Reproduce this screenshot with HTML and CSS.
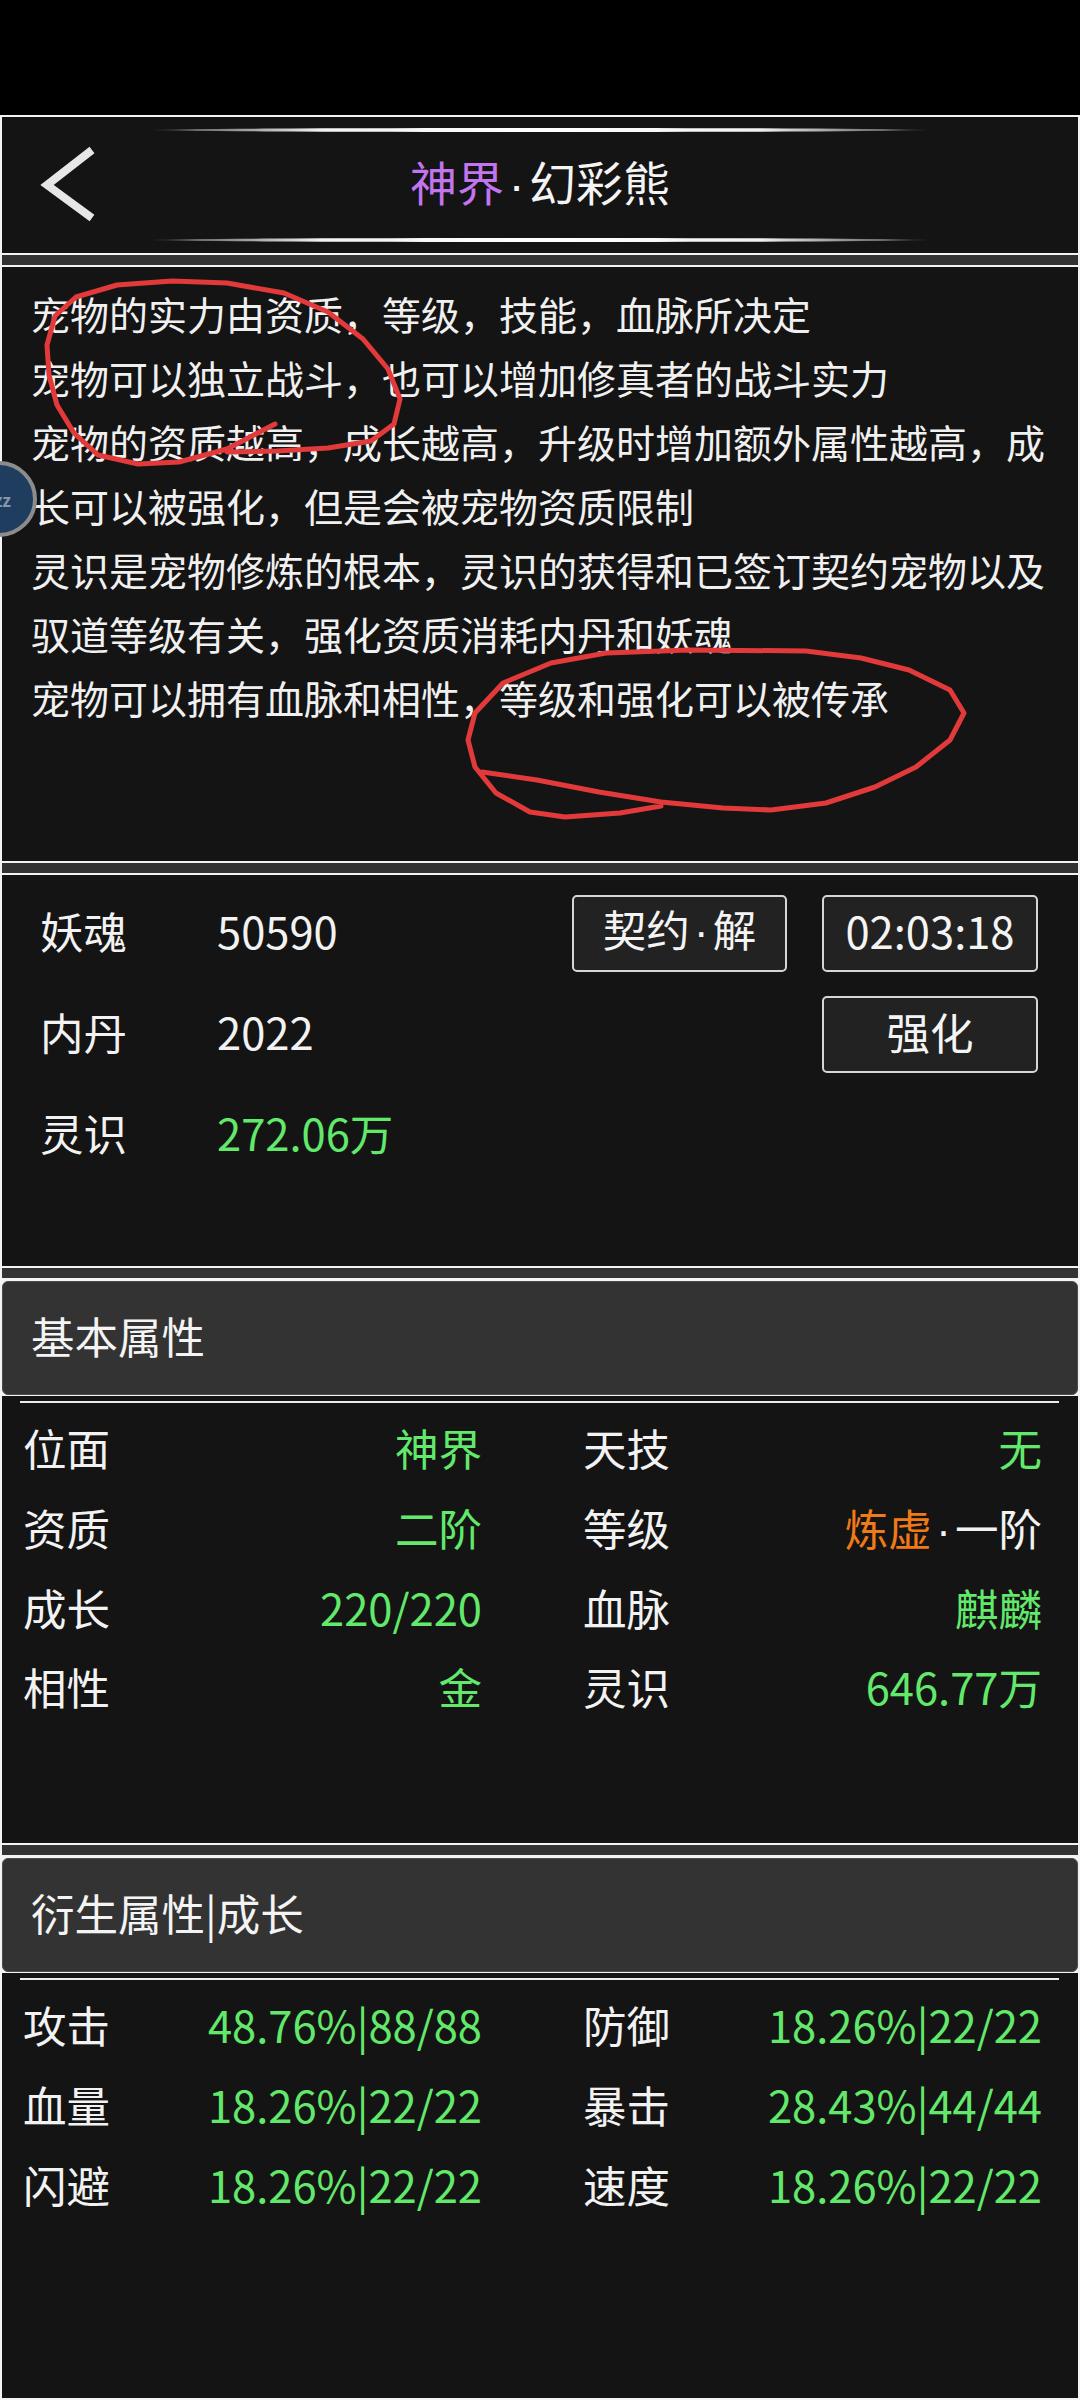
FILE: index.html
```html
<!DOCTYPE html>
<html lang="zh-CN">
<head>
<meta charset="utf-8">
<title>神界·幻彩熊</title>
<link rel="stylesheet" href="styles.css">
</head>
<body>
<div class="statusbar"></div>
<main class="page">
  <section class="panel title-panel">
    <div class="deco-line"></div>
    <div class="title-row">
      <svg class="back" viewBox="0 0 62 106" width="62" height="106" aria-hidden="true">
        <polyline points="54,18 9,53 54,86" fill="none" stroke="#e6e6e6" stroke-width="8" stroke-linejoin="miter"/>
      </svg>
      <h1 class="title"><span class="purple">神界</span><span class="dot">·</span>幻彩熊</h1>
      <span></span>
    </div>
    <div class="deco-line"></div>
  </section>

  <div class="strip"></div>

  <section class="panel desc-panel">
    <p>宠物的实力由资质，等级，技能，血脉所决定</p>
    <p>宠物可以独立战斗，也可以增加修真者的战斗实力</p>
    <p>宠物的资质越高，成长越高，升级时增加额外属性越高，成长可以被强化，但是会被宠物资质限制</p>
    <p>灵识是宠物修炼的根本，灵识的获得和已签订契约宠物以及驭道等级有关，强化资质消耗内丹和妖魂</p>
    <p>宠物可以拥有血脉和相性，等级和强化可以被传承</p>
    <svg class="marks" viewBox="2 267 1076 594" width="1076" height="594" aria-hidden="true">
      <polyline fill="none" stroke="#e23a3a" stroke-width="5" stroke-linecap="round" stroke-linejoin="round"
        points="275,424 227,449 179,462 138,464 98,455 74,433 57,405 49,375 47,345 55,316 76,297 117,285 172,281 227,283 284,293 328,312 363,339 388,369 400,399 394,424 371,441 328,448 277,451 227,452"/>
      <polyline fill="none" stroke="#e23a3a" stroke-width="5" stroke-linecap="round" stroke-linejoin="round"
        points="482,772 537,780 599,792 661,802 723,808 771,810 826,803 875,787 916,767 950,740 964,713 950,690 909,670 861,658 806,651 689,650 606,653 551,663 503,683 475,713 468,740 475,767 496,793 530,812 565,817 620,813 661,806"/>
    </svg>
  </section>

  <div class="strip"></div>

  <section class="panel res-panel">
    <div class="res-grid">
      <span class="k">妖魂</span><span class="v">50590</span>
      <button class="btn">契约<span class="dot">·</span>解</button>
      <button class="btn">02:03:18</button>

      <span class="k">内丹</span><span class="v">2022</span>
      <span></span>
      <button class="btn">强化</button>

      <span class="k">灵识</span><span class="v green">272.06万</span>
    </div>
  </section>

  <div class="strip strip-head"></div>

  <div class="header">基本属性</div>
  <section class="panel attr-panel">
    <div class="rule"></div>
    <div class="attr-grid">
      <div class="attr"><span class="k">位面</span><span class="v green">神界</span></div>
      <div class="attr"><span class="k">天技</span><span class="v green">无</span></div>
      <div class="attr"><span class="k">资质</span><span class="v green">二阶</span></div>
      <div class="attr"><span class="k">等级</span><span class="v"><span class="orange">炼虚</span><span class="dot">·</span>一阶</span></div>
      <div class="attr"><span class="k">成长</span><span class="v green">220/220</span></div>
      <div class="attr"><span class="k">血脉</span><span class="v green">麒麟</span></div>
      <div class="attr"><span class="k">相性</span><span class="v green">金</span></div>
      <div class="attr"><span class="k">灵识</span><span class="v green">646.77万</span></div>
    </div>
  </section>

  <div class="strip strip-head"></div>

  <div class="header">衍生属性|成长</div>
  <section class="panel derived-panel">
    <div class="rule"></div>
    <div class="attr-grid">
      <div class="attr"><span class="k">攻击</span><span class="v green">48.76%|88/88</span></div>
      <div class="attr"><span class="k">防御</span><span class="v green">18.26%|22/22</span></div>
      <div class="attr"><span class="k">血量</span><span class="v green">18.26%|22/22</span></div>
      <div class="attr"><span class="k">暴击</span><span class="v green">28.43%|44/44</span></div>
      <div class="attr"><span class="k">闪避</span><span class="v green">18.26%|22/22</span></div>
      <div class="attr"><span class="k">速度</span><span class="v green">18.26%|22/22</span></div>
    </div>
  </section>
</main>
<div class="bubble">zz</div>
</body>
</html>
```

FILE: styles.css
```css
* { box-sizing: border-box; }

html, body {
  margin: 0;
  padding: 0;
}

body {
  width: 1080px;
  height: 2400px;
  overflow: hidden;
  position: relative;
  background: #f4f4f4;
  color: #f2f2f2;
  font-family: "Noto Sans CJK SC", "Noto Sans", sans-serif;
}

.statusbar {
  height: 115px;
  background: #000;
}

.page {
  padding: 2px 2px 2px 2px;
  display: flex;
  flex-direction: column;
}

.panel {
  background: #141414;
  position: relative;
}

.strip {
  height: 10px;
  background: #333333;
  margin: 2px 0;
}

.strip-head {
  margin-bottom: 3px;
}

/* title */
.title-panel {
  height: 136px;
  padding: 11px 0;
  display: flex;
  flex-direction: column;
}

.deco-line {
  height: 4px;
  margin: 0 148px;
  border-radius: 50%;
  background: linear-gradient(90deg, rgba(255,255,255,0) 0%, #6a6a6a 6%, #f2f2f2 22%, #ffffff 50%, #f2f2f2 78%, #6a6a6a 94%, rgba(255,255,255,0) 100%);
}

.title-row {
  flex: 1;
  display: grid;
  grid-template-columns: 1fr auto 1fr;
  align-items: center;
}

.back {
  display: block;
  margin-left: 36px;
}

.title {
  margin: -5px 0 0;
  font-size: 47px;
  font-weight: 400;
  line-height: 1;
  color: #f4f4f4;
  white-space: nowrap;
}

.purple { color: #c275ee; }
.green { color: #62e96c; }
.orange { color: #f07a18; }

.dot {
  font-family: "Liberation Sans", sans-serif;
  padding: 0 0.1em;
}

/* description */
.desc-panel {
  height: 594px;
  padding: 14px 16px 0 29px;
}

.desc-panel p {
  margin: 0;
  font-size: 39px;
  line-height: 64px;
  color: #f0f0f0;
}

.marks {
  position: absolute;
  left: 0;
  top: 0;
}

/* resources */
.res-panel {
  height: 391px;
  padding: 5px 40px 0 38px;
}

.res-grid {
  display: grid;
  grid-template-columns: 142px 1fr 215px 216px;
  grid-auto-rows: 101px;
  column-gap: 35px;
  align-items: center;
  font-size: 43.5px;
}

.res-grid .k,
.res-grid .v {
  line-height: 1;
}

.btn {
  height: 77px;
  width: 100%;
  margin-top: 6px;
  border: 2px solid #d6d6d6;
  border-radius: 5px;
  background: #222222;
  color: #f4f4f4;
  font-family: inherit;
  font-size: 43.5px;
  line-height: 1;
  padding: 0 0 6px;
}

/* headers */
.header {
  height: 114px;
  margin-bottom: 1px;
  background: #333333;
  border: 1px solid #4c4c4c;
  border-radius: 6px;
  padding: 0 0 6px 28px;
  display: flex;
  align-items: center;
  font-size: 43.5px;
  color: #f4f4f4;
}

.rule {
  height: 2px;
  background: #ececec;
  margin: 5px 19px 0 18px;
}

.attr-panel {
  height: 447px;
}

.derived-panel {
  height: 425px;
}

.attr-grid {
  margin-top: 5px;
  padding: 0 0 0 21px;
  display: grid;
  grid-template-columns: 459px 459px;
  column-gap: 101px;
  grid-auto-rows: 79.7px;
  font-size: 43.5px;
}

.attr {
  display: flex;
  justify-content: space-between;
  align-items: center;
  white-space: nowrap;
}

/* floating bubble */
.bubble {
  position: absolute;
  left: -39px;
  top: 461px;
  width: 76px;
  height: 76px;
  border-radius: 50%;
  border: 4px solid #8c8c8c;
  background: #1f3d5e;
  color: #8597ad;
  font-size: 17px;
  font-weight: 700;
  display: flex;
  align-items: center;
  justify-content: flex-end;
  padding-right: 22px;
  line-height: 1;
}
```
